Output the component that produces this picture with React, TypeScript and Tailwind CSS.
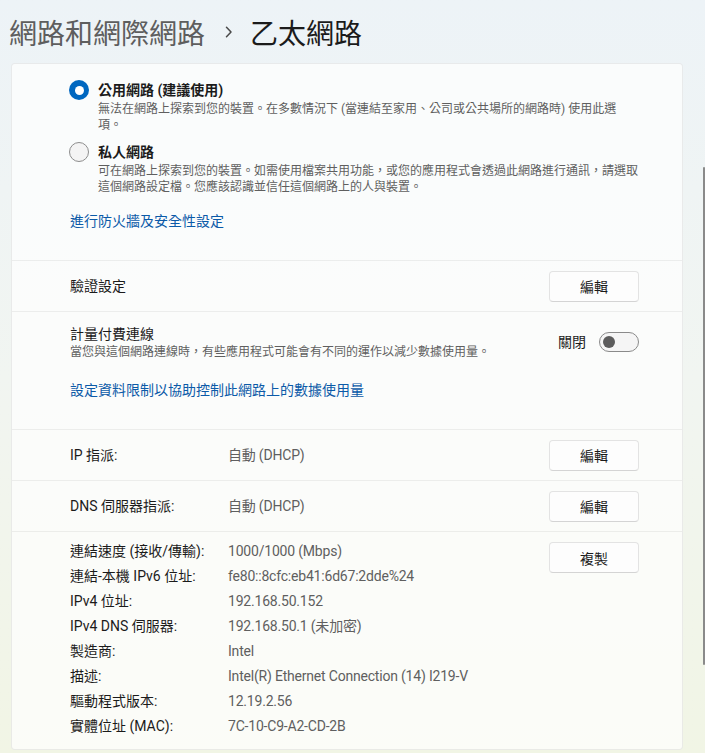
import React from "react";

const font = "font-['Roboto','Noto_Sans_CJK_TC','Noto_Sans_CJK_JP',sans-serif]";
const cjk = "font-['Noto_Sans_CJK_TC','Noto_Sans_CJK_JP',sans-serif]";

function Btn({ label }: { label: string }) {
  return (
    <button className={`h-[31px] w-[90px] shrink-0 rounded-[4px] border border-[#e3e3e3] border-b-[#d4d4d4] bg-[#fdfdfd] text-[14px] leading-[20px] text-[#1b1b1b] ${cjk}`}>
      {label}
    </button>
  );
}

function Radio({ checked }: { checked: boolean }) {
  return checked ? (
    <span className="flex h-[20px] w-[20px] shrink-0 items-center justify-center rounded-full bg-[#0067c0]">
      <span className="h-[9px] w-[9px] rounded-full bg-white" />
    </span>
  ) : (
    <span className="h-[20px] w-[20px] shrink-0 rounded-full border border-[#8d8d8d] bg-[#f4f4f4]" />
  );
}

const details: [string, string][] = [
  ["連結速度 (接收/傳輸):", "1000/1000 (Mbps)"],
  ["連結-本機 IPv6 位址:", "fe80::8cfc:eb41:6d67:2dde%24"],
  ["IPv4 位址:", "192.168.50.152"],
  ["IPv4 DNS 伺服器:", "192.168.50.1 (未加密)"],
  ["製造商:", "Intel"],
  ["描述:", "Intel(R) Ethernet Connection (14) I219-V"],
  ["驅動程式版本:", "12.19.2.56"],
  ["實體位址 (MAC):", "7C-10-C9-A2-CD-2B"],
];

export default function App() {
  return (
    <div
      className={`relative h-[753px] w-[705px] overflow-hidden bg-gradient-to-b from-[#edf3f7] via-[#f1f5f1] to-[#f1f5e5] ${font}`}
    >
      {/* Header */}
      <div className="flex h-[63px] items-center pl-[9px]">
        <span className={`text-[28px] font-normal leading-[36px] text-[#5e5e5e] ${cjk}`}>網路和網際網路</span>
        <svg width="8" height="12" viewBox="0 0 8 12" className="ml-[20px] mr-[17px] mt-[1px]">
          <path d="M1.5 1.2 L6 6 L1.5 10.8" fill="none" stroke="#4a4a4a" strokeWidth="1.5" strokeLinecap="round" strokeLinejoin="round" />
        </svg>
        <span className={`text-[28px] font-normal leading-[36px] text-[#1b1b1b] ${cjk}`}>乙太網路</span>
      </div>

      {/* Card */}
      <div className="ml-[11px] w-[672px] rounded-[4px] border border-black/[0.07] bg-white/70">
        {/* Network profile */}
        <div className="h-[196px] pl-[57px] pr-[43px] pt-[16px]">
          <div className="flex gap-[9px]">
            <Radio checked />
            <div>
              <div className="text-[14px] font-bold leading-[20px] text-[#1b1b1b]">公用網路 (建議使用)</div>
              <div className="mt-[1px] whitespace-nowrap text-[12px] leading-[16px] text-[#5f5f5f]">
                無法在網路上探索到您的裝置。在多數情況下 (當連結至家用、公司或公共場所的網路時) 使用此選
                <br />
                項。
              </div>
            </div>
          </div>
          <div className="mt-[9px] flex gap-[9px]">
            <Radio checked={false} />
            <div>
              <div className="text-[14px] font-bold leading-[20px] text-[#1b1b1b]">私人網路</div>
              <div className="mt-[1px] whitespace-nowrap text-[12px] leading-[16px] text-[#5f5f5f]">
                可在網路上探索到您的裝置。如需使用檔案共用功能，或您的應用程式會透過此網路進行通訊，請選取
                <br />
                這個網路設定檔。您應該認識並信任這個網路上的人與裝置。
              </div>
            </div>
          </div>
          <div className="mt-[16px] pl-[1px] text-[14px] leading-[20px] text-[#0b5aa8]">進行防火牆及安全性設定</div>
        </div>

        {/* Auth */}
        <div className="flex h-[51px] items-center border-t border-black/[0.06] pl-[58px] pr-[43px]">
          <span className="flex-1 text-[14px] leading-[20px] text-[#1b1b1b]">驗證設定</span>
          <Btn label="編輯" />
        </div>

        {/* Metered */}
        <div className="h-[118px] border-t border-black/[0.06] pl-[58px] pr-[43px] pt-[12px]">
          <div className="flex items-center">
            <div className="flex-1">
              <div className="text-[14px] leading-[20px] text-[#1b1b1b]">計量付費連線</div>
              <div className="text-[12px] leading-[16px] text-[#5f5f5f]">
                當您與這個網路連線時，有些應用程式可能會有不同的運作以減少數據使用量。
              </div>
            </div>
            <span className="mr-[13px] text-[14px] leading-[20px] text-[#1b1b1b]">關閉</span>
            <span className="flex h-[20px] w-[40px] items-center rounded-full border border-[#8a8a8a] bg-[#f5f5f5] pl-[3px]">
              <span className="h-[12px] w-[12px] rounded-full bg-[#5c5c5c]" />
            </span>
          </div>
          <div className="mt-[20px] text-[14px] leading-[20px] text-[#0b5aa8]">設定資料限制以協助控制此網路上的數據使用量</div>
        </div>

        {/* IP */}
        <div className="flex h-[51px] items-center border-t border-black/[0.06] pl-[58px] pr-[43px]">
          <span className="w-[158px] text-[14px] leading-[20px] text-[#1b1b1b]">IP 指派:</span>
          <span className="flex-1 text-[14px] leading-[20px] tracking-[-0.2px] text-[#5f5f5f]">自動 (DHCP)</span>
          <Btn label="編輯" />
        </div>

        {/* DNS */}
        <div className="flex h-[51px] items-center border-t border-black/[0.06] pl-[58px] pr-[43px]">
          <span className="w-[158px] text-[14px] leading-[20px] text-[#1b1b1b]">DNS 伺服器指派:</span>
          <span className="flex-1 text-[14px] leading-[20px] tracking-[-0.2px] text-[#5f5f5f]">自動 (DHCP)</span>
          <Btn label="編輯" />
        </div>

        {/* Details */}
        <div className="flex h-[218px] items-start border-t border-black/[0.06] pl-[58px] pr-[43px] pt-[7px]">
          <div className="flex-1">
            {details.map(([k, v]) => (
              <div key={k} className="flex h-[25px] items-center text-[14px]">
                <span className="w-[158px] text-[#1b1b1b]">{k}</span>
                <span className="tracking-[-0.2px] text-[#5f5f5f]">{v}</span>
              </div>
            ))}
          </div>
          <div className="mt-[3px]">
            <Btn label="複製" />
          </div>
        </div>
      </div>

      {/* Scrollbar */}
      <div className="absolute right-0 top-[167px] h-[498px] w-[2px] rounded-full bg-[#8a8a8a]" />
    </div>
  );
}
